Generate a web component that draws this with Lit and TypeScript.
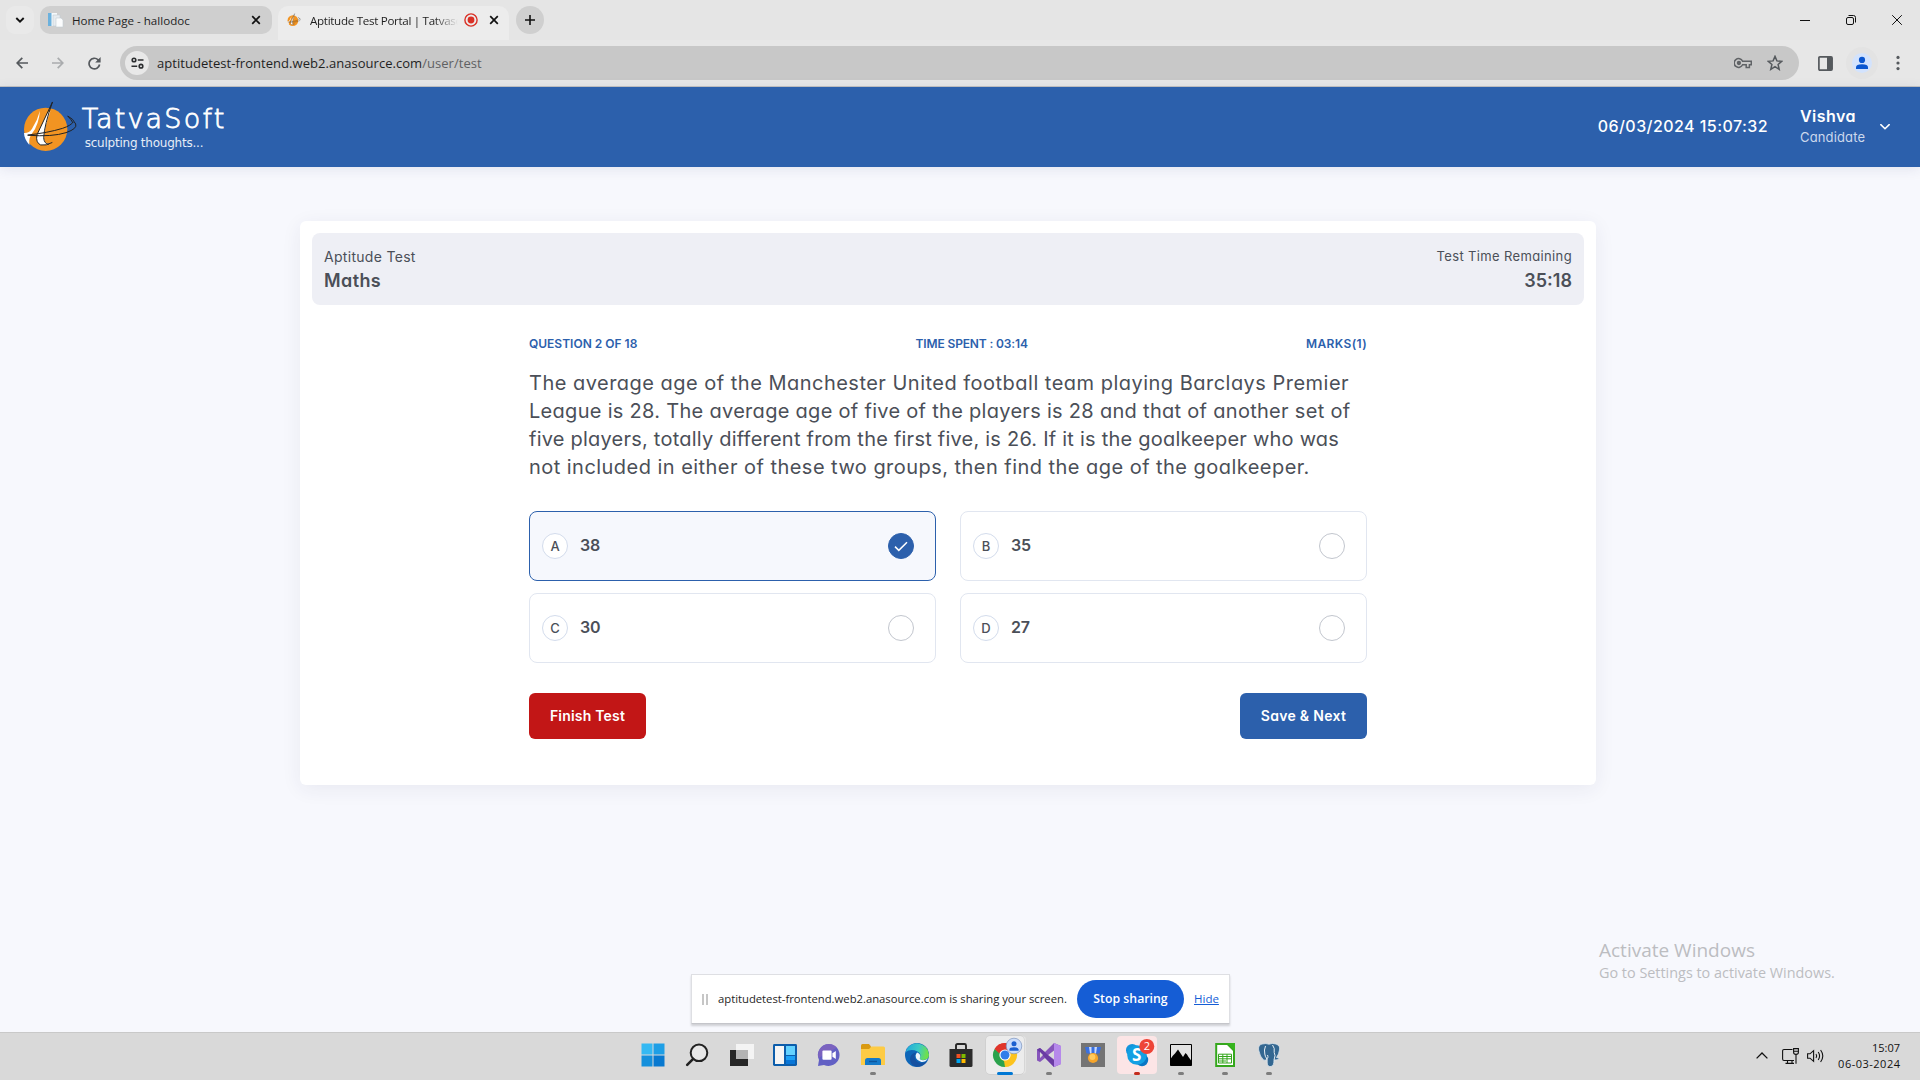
import { LitElement, html, css, svg } from 'lit';
import { customElement, property, state } from 'lit/decorators.js';
import { classMap } from 'lit/directives/class-map.js';

const UI_FONT = css`'Open Sans', 'Noto Sans', sans-serif`;
const APP_FONT = css`Inter, 'Open Sans', sans-serif`;

const logoMark = svg`
  <circle cx="107" cy="118" r="65" fill="#f29422" />
  <path d="M90 62Q82 92 66 116Q57 130 42 129Q42 146 58 165Q55 142 67 129Q86 104 90 62Z" fill="#fff" />
  <path d="M117 66L112 70L82 132Q75 158 91 164Q106 168 122 161Q103 164 102 145Q104 108 121 64Z" fill="#fff" />
  <g fill="none" stroke="#222" stroke-width="3" stroke-linecap="round">
    <path d="M127 37L81 134Q76 158 92 165Q108 168 126 158" />
    <path d="M127 37Q103 105 101 143Q102 162 116 163" />
    <path d="M54 135Q112 129 158 115Q184 106 189 97" />
    <path d="M54 136Q128 141 168 128Q203 116 197 102Q190 86 173 78Q184 89 188 97" />
  </g>`;

@customElement('browser-chrome')
export class BrowserChrome extends LitElement {
  static styles = css`
    :host { display: block; flex: none; font-family: ${UI_FONT}; color: #1f1f1f; }
    svg { display: block; flex: none; }
    .strip { display: flex; height: 40px; padding-left: 6px; background: #e5e5e5; box-sizing: border-box; }
    .search { width: 28px; height: 28px; margin: 6px 6px 0 0; border-radius: 9px; background: #e9e9e9; display: grid; place-items: center; }
    .tab { display: flex; align-items: center; box-sizing: border-box; margin-top: 6px; }
    .idle { width: 232px; height: 28px; border-radius: 10px; background: #cfcfcf; padding: 0 11px 0 8px; }
    .open { width: 231px; height: 34px; margin-left: 6px; padding: 0 10px 6px 9px; border-radius: 10px 10px 0 0; background: #ececec; }
    .label { flex: 1; white-space: nowrap; overflow: hidden; font-size: 11.6px; line-height: 18px; padding-top: 1px; }
    .idle .label { margin-left: 8px; }
    .open .label { margin: 0 6px 0 9px; letter-spacing: -0.3px; mask-image: linear-gradient(90deg, #000 84%, transparent); }
    .rec { margin-right: 11px; }
    .add { width: 28px; height: 28px; margin: 6px 0 0 7px; border-radius: 14px; background: #cfcfcf; display: grid; place-items: center; }
    .window { margin-left: auto; display: flex; align-items: center; gap: 36px; padding-right: 18px; }
    .toolbar { display: flex; align-items: center; height: 47px; box-sizing: border-box; border-bottom: 1px solid #c2c2c2; background: #e7e7e7; padding: 0 19px 0 16px; }
    .nav { display: flex; gap: 24px; width: 104px; }
    .address { flex: 1; height: 34px; border-radius: 17px; background: #c8c8c8; display: flex; align-items: center; padding: 0 16px 0 5px; box-sizing: border-box; }
    .site { width: 24px; height: 24px; border-radius: 50%; background: #e8e8e8; display: grid; place-items: center; margin-right: 8px; }
    .url { flex: 1; font-size: 13px; line-height: 20px; letter-spacing: 0.04px; white-space: nowrap; }
    .path { color: #5f6163; }
    .star { margin-left: 15px; }
    .panel { margin-left: 19px; }
    .profile { width: 32px; height: 32px; border-radius: 50%; background: #e3e3e3; display: grid; place-items: center; margin: 0 17px 0 13px; }
  `;

  private cross() {
    return html`<svg width="10" height="10" viewBox="0 0 10 10"><path d="M1.2 1.2L8.8 8.8M8.8 1.2L1.2 8.8" stroke="#111" stroke-width="1.7" /></svg>`;
  }

  render() {
    return html`
      <div class="strip">
        <div class="search"><svg width="10" height="10" viewBox="0 0 10 10"><path d="M1.3 3L5 6.7L8.7 3" fill="none" stroke="#111" stroke-width="1.9" /></svg></div>
        <div class="tab idle">
          <svg width="16" height="16" viewBox="0 0 16 16"><path d="M0 1h9v13H0z" fill="#f6f9fb" /><path d="M0 1h3.5v13H0z" fill="#6cb1dd" /><path d="M5 3h7v11H5z" fill="#e7ecf0" stroke="#c3ccd3" stroke-width=".6" /><path d="M8 6h5l2 2v7H8z" fill="#fbfcfd" stroke="#c3ccd3" stroke-width=".6" /></svg>
          <span class="label">Home Page - hallodoc</span>
          ${this.cross()}
        </div>
        <div class="tab open">
          <svg width="14" height="14" viewBox="36 30 170 160">${logoMark}</svg>
          <span class="label">Aptitude Test Portal | Tatvasoft</span>
          <svg class="rec" width="14" height="14" viewBox="0 0 14 14"><circle cx="7" cy="7" r="6.1" fill="none" stroke="#d93025" stroke-width="1.4" /><circle cx="7" cy="7" r="3.4" fill="#d93025" /></svg>
          ${this.cross()}
        </div>
        <div class="add"><svg width="10" height="10" viewBox="0 0 10 10"><path d="M5 0V10M0 5H10" stroke="#111" stroke-width="1.6" /></svg></div>
        <div class="window">
          <svg width="10" height="10" viewBox="0 0 10 10"><path d="M0 5.5H10" stroke="#111" /></svg>
          <svg width="10" height="10" viewBox="0 0 10 10" fill="none" stroke="#111"><rect x=".5" y="2.5" width="7" height="7" rx="1.5" /><path d="M2.5.5H7.5Q9.5.5 9.5 2.5V7.5" /></svg>
          <svg width="10" height="10" viewBox="0 0 10 10"><path d="M.2.2L9.8 9.8M9.8.2L.2 9.8" stroke="#111" /></svg>
        </div>
      </div>
      <div class="toolbar">
        <div class="nav">
          <svg width="12" height="12" viewBox="0 0 12 12" fill="none" stroke="#55595d" stroke-width="1.7"><path d="M12 6H1.2M6.3.8L1.2 6L6.3 11.2" /></svg>
          <svg width="12" height="12" viewBox="0 0 12 12" fill="none" stroke="#aaacae" stroke-width="1.7"><path d="M0 6H10.8M5.7.8L10.8 6L5.7 11.2" /></svg>
          <svg width="13" height="13" viewBox="0 0 13 13"><path d="M11.6 7.5A5.3 5.3 0 1 1 10.1 2.8L11.4 4.1" fill="none" stroke="#55595d" stroke-width="1.7" /><path d="M12.6 0V5.4H7.2Z" fill="#55595d" /></svg>
        </div>
        <div class="address">
          <span class="site"><svg width="13" height="12" viewBox="0 0 13 12" fill="none" stroke="#2b2d2f" stroke-width="1.6"><circle cx="3" cy="3" r="1.8" /><path d="M6.8 3H12.5M.5 9.2H6.2" /><circle cx="10" cy="9.2" r="1.8" /></svg></span>
          <span class="url">aptitudetest-frontend.web2.anasource.com<span class="path">/user/test</span></span>
          <svg width="18" height="12" viewBox="0 0 18 12" fill="none" stroke="#606366" stroke-width="1.5"><path d="M8.6 4.2A4.4 4.4 0 1 0 8.6 7.8H12.2V10.4H15.4V7.8H17.3V4.2Z" /><circle cx="4.9" cy="6" r="1.4" fill="#606366" /></svg>
          <svg class="star" width="16" height="16" viewBox="0 0 16 16"><path d="M8 1.4L9.9 5.9L14.8 6.3L11.1 9.5L12.2 14.3L8 11.7L3.8 14.3L4.9 9.5L1.2 6.3L6.1 5.9Z" fill="none" stroke="#55595d" stroke-width="1.5" /></svg>
        </div>
        <svg class="panel" width="15" height="15" viewBox="0 0 15 15"><rect x=".9" y=".9" width="13.2" height="13.2" rx="1" fill="none" stroke="#55595d" stroke-width="1.7" /><path d="M9 1H14V14H9Z" fill="#55595d" /></svg>
        <div class="profile"><svg width="20" height="20" viewBox="0 0 20 20"><circle cx="10" cy="10" r="10" fill="#d3e3fd" /><circle cx="10" cy="6.9" r="3.1" fill="#0b57d0" /><path d="M4 16V14.2Q4 11.2 10 11.2T16 14.2V16Z" fill="#0b57d0" /></svg></div>
        <svg width="6" height="16" viewBox="0 0 6 16" fill="#55595d"><circle cx="3" cy="2.4" r="1.6" /><circle cx="3" cy="8" r="1.6" /><circle cx="3" cy="13.6" r="1.6" /></svg>
      </div>`;
  }
}

@customElement('site-header')
export class SiteHeader extends LitElement {
  static styles = css`
    :host { flex: none; display: flex; align-items: center; height: 80px; box-sizing: border-box; padding: 0 30px 0 22px; background: #2c60ac; color: #fff; font-family: ${APP_FONT}; font-feature-settings: 'cv11'; box-shadow: 0 2px 12px rgba(40, 50, 110, 0.1); z-index: 1; white-space: nowrap; }
    svg { display: block; }
    .brand { display: flex; flex-direction: column; margin: 2px 0 0 3px; font-family: 'DejaVu Sans', sans-serif; }
    .name { font-size: 27px; font-weight: 200; line-height: 30px; letter-spacing: 2.2px; -webkit-text-stroke: 0.8px #fff; }
    .motto { font-size: 12px; line-height: 18px; letter-spacing: -0.23px; padding-left: 3px; color: #e6edf7; }
    .clock { margin-left: auto; padding-bottom: 2px; font-size: 16px; font-weight: 500; letter-spacing: 0.44px; }
    .user { margin-left: 32px; width: 65px; display: flex; flex-direction: column; }
    .who { font-size: 16px; font-weight: 600; line-height: 20px; letter-spacing: 0.44px; }
    .role { font-size: 13px; line-height: 22px; letter-spacing: 0.15px; color: #ccd9ec; }
    .caret { margin-left: 15px; }
  `;

  render() {
    return html`
      <svg width="56.7" height="53.3" viewBox="36 30 170 160">${logoMark}</svg>
      <div class="brand"><span class="name">TatvaSoft</span><span class="motto">sculpting thoughts...</span></div>
      <span class="clock">06/03/2024 15:07:32</span>
      <div class="user"><span class="who">Vishva</span><span class="role">Candidate</span></div>
      <svg class="caret" width="10" height="6" viewBox="0 0 10 6"><path d="M.8.6L5 4.8L9.2.6" fill="none" stroke="#fff" stroke-width="1.5" stroke-linecap="round" /></svg>`;
  }
}

@customElement('answer-option')
export class AnswerOption extends LitElement {
  @property() letter = '';
  @property() value = '';
  @property({ type: Boolean }) checked = false;

  static styles = css`
    :host { display: block; }
    .box { display: flex; align-items: center; height: 70px; box-sizing: border-box; padding: 0 21px 0 12px; border: 1px solid #e1e6f0; border-radius: 8px; background: #fff; }
    .box.on { border-color: #2c60ac; background: #f6f8fd; }
    .letter { width: 26px; height: 26px; box-sizing: border-box; border: 1px solid #d3dcec; border-radius: 50%; background: #fff; font-size: 13px; font-weight: 500; line-height: 25px; text-align: center; }
    .value { flex: 1; margin-left: 12px; padding-bottom: 2px; font-size: 16px; font-weight: 600; letter-spacing: -0.2px; }
    .radio { width: 26px; height: 26px; box-sizing: border-box; border: 1px solid #c2c6ce; border-radius: 50%; display: grid; place-items: center; }
    .on .radio { border-color: #2c60ac; background: #2c60ac; }
  `;

  render() {
    return html`<div class=${classMap({ box: true, on: this.checked })}>
      <span class="letter">${this.letter}</span>
      <span class="value">${this.value}</span>
      <span class="radio">${this.checked
        ? html`<svg width="14" height="11" viewBox="0 0 14 11"><path d="M1 5.6L4.8 9.4L13 1.2" fill="none" stroke="#fff" stroke-width="1.5" /></svg>`
        : null}</span>
    </div>`;
  }
}

@customElement('test-card')
export class TestCard extends LitElement {
  @state() private selected = 'A';

  private options = [['A', '38'], ['B', '35'], ['C', '30'], ['D', '27']];
  private question = [
    'The average age of the Manchester United football team playing Barclays Premier',
    'League is 28. The average age of five of the players is 28 and that of another set of',
    'five players, totally different from the first five, is 26. If it is the goalkeeper who was',
    'not included in either of these two groups, then find the age of the goalkeeper.',
  ];

  static styles = css`
    :host { display: block; width: 1296px; height: 564px; box-sizing: border-box; padding: 12px; background: #fff; border-radius: 6px; box-shadow: 0 4px 20px rgba(40, 45, 90, 0.07); color: #4b4f58; font-family: ${APP_FONT}; font-feature-settings: 'cv11'; white-space: nowrap; }
    .bar { display: flex; justify-content: space-between; align-items: center; height: 72px; box-sizing: border-box; padding: 0 12px; border-radius: 8px; background: #eeeff5; }
    .cell { display: flex; flex-direction: column; line-height: 24px; }
    .end { text-align: right; }
    .title { font-size: 14px; letter-spacing: 0.3px; }
    .subject { font-size: 18px; font-weight: 600; letter-spacing: 0.4px; }
    .caption { font-size: 13px; line-height: 23px; padding-bottom: 1px; letter-spacing: 0.36px; }
    .remaining { font-size: 18px; font-weight: 600; }
    .body { width: 838px; margin: 27px auto 0; }
    .meta { display: flex; justify-content: space-between; font-size: 12px; font-weight: 600; line-height: 24px; color: #2c60ac; }
    .spent { letter-spacing: -0.14px; }
    .marks { letter-spacing: 0.38px; }
    .question { display: flex; flex-direction: column; align-items: flex-start; margin-top: 13px; font-size: 20px; line-height: 28px; }
    .line:nth-child(1) { letter-spacing: 0.485px; }
    .line:nth-child(2) { letter-spacing: 0.295px; }
    .line:nth-child(3) { letter-spacing: 0.225px; }
    .line:nth-child(4) { letter-spacing: 0.46px; }
    .options { display: grid; grid-template-columns: 1fr 1fr; gap: 12px 24px; margin-top: 30px; }
    .actions { display: flex; justify-content: space-between; margin-top: 30px; }
    .button { height: 46px; border: 0; border-radius: 6px; padding: 0; color: #fff; font: 600 14px/46px ${APP_FONT}; font-feature-settings: 'cv11'; }
    .finish { width: 117px; background: #c21616; letter-spacing: 0.2px; }
    .next { width: 127px; background: #2c60ac; letter-spacing: 0.3px; }
  `;

  render() {
    return html`
      <div class="bar">
        <div class="cell"><span class="title">Aptitude Test</span><span class="subject">Maths</span></div>
        <div class="cell end"><span class="caption">Test Time Remaining</span><span class="remaining">35:18</span></div>
      </div>
      <div class="body">
        <div class="meta"><span>QUESTION 2 OF 18</span><span class="spent">TIME SPENT : 03:14</span><span class="marks">MARKS(1)</span></div>
        <div class="question">${this.question.map((line) => html`<span class="line">${line}</span>`)}</div>
        <div class="options">
          ${this.options.map(([letter, value]) => html`<answer-option .letter=${letter} .value=${value}
            .checked=${this.selected === letter} @click=${() => (this.selected = letter)}></answer-option>`)}
        </div>
        <div class="actions"><button class="button finish">Finish Test</button><button class="button next">Save &amp; Next</button></div>
      </div>`;
  }
}

@customElement('share-bar')
export class ShareBar extends LitElement {
  static styles = css`
    :host { display: flex; align-items: center; width: 539px; height: 50px; box-sizing: border-box; padding: 0 10px; background: #fff; border: 1px solid #dedfe3; border-bottom-color: #c4c5ca; box-shadow: 0 2px 2px rgba(0, 0, 0, 0.16); font: 11.3px/18px ${UI_FONT}; color: #1f1f1f; white-space: nowrap; }
    .grip { width: 2px; height: 11px; margin-right: 10px; border: solid #c6c6c6; border-width: 0 2px; }
    .message { width: 359px; letter-spacing: -0.02px; }
    .stop { width: 107px; height: 38px; border-radius: 19px; background: #155dd5; color: #fff; font-size: 12.3px; font-weight: 600; line-height: 38px; text-align: center; }
    .hide { margin-left: 10px; color: #155dd5; font-size: 11.5px; text-decoration: underline; }
  `;

  render() {
    return html`<span class="grip"></span><span class="message">aptitudetest-frontend.web2.anasource.com is sharing your screen.</span><span class="stop">Stop sharing</span><span class="hide">Hide</span>`;
  }
}

type Mark = '' | 'idle' | 'active' | 'alert';

const apps: { mark: Mark; tile?: string; art: unknown }[] = [
  { mark: '', art: svg`<path d="M.5.5h11v11H.5z" fill="#35b9f3" /><path d="M12.5.5h11v11h-11z" fill="#1e9fe6" /><path d="M.5 12.5h11v11H.5z" fill="#1590dc" /><path d="M12.5 12.5h11v11h-11z" fill="#0879d0" />` },
  { mark: '', art: svg`<circle cx="14" cy="9.8" r="8.3" fill="#e8e8e8" stroke="#222" stroke-width="2" /><path d="M8.2 15.8L2.2 21.8" stroke="#222" stroke-width="2.6" stroke-linecap="round" />` },
  { mark: '', art: svg`<path d="M1 7h18v16H1z" fill="#262626" /><path d="M7 1h18v15H7z" fill="#f4f4f4" /><path d="M7 7h12v9H7z" fill="#b4b4b4" />` },
  { mark: '', art: svg`<rect y="1" width="24" height="22" rx="1.4" fill="#0c5dab" /><path d="M2 3h9v18H2z" fill="#f5f5f5" /><path d="M13 3h9v9h-9z" fill="#63d2ff" /><path d="M13 13h9v4h-9z" fill="#1ba1f6" /><path d="M13 17h9v4h-9z" fill="#0876d8" />` },
  { mark: '', art: svg`<path d="M12 1A11 11 0 1 1 7 22L1 23L2 17A11 11 0 0 1 12 1Z" fill="#6260c4" /><path d="M12 1A11 11 0 0 0 1.5 15L20 4.5A11 11 0 0 0 12 1Z" fill="#8665bd" opacity=".7" /><rect x="5.4" y="7.4" width="9.2" height="9.4" rx="1" fill="#fff" /><path d="M15.4 10.2L18.8 8V16L15.4 13.8Z" fill="#fff" />` },
  { mark: 'idle', art: svg`<path d="M0 2.5Q0 1 1.5 1H8L10 3.5V8H0Z" fill="#d99a12" /><path d="M0 6H8L10.5 3.5H22.5Q24 3.5 24 5V22H0Z" fill="#fdcb45" /><path d="M4 22V17.5Q4 15 6.5 15H17.5Q20 15 20 17.5V22Z" fill="#1479c9" /><path d="M8 18.5H16" stroke="#0b559e" stroke-width="1.4" />` },
  { mark: '', art: svg`<defs><linearGradient id="sea" x1="0" y1="0" x2="1" y2=".2"><stop stop-color="#1fa6df" /><stop offset=".6" stop-color="#3ccbc4" /><stop offset="1" stop-color="#6fe04c" /></linearGradient></defs><circle cx="12" cy="12" r="12" fill="#0e66b8" /><path d="M.5 9A12 12 0 0 1 24 11.5Q24 16.5 18.5 17Q14.5 17 14.8 15Q17 10.5 12.5 8.4Q6 5.5.5 9Z" fill="url(#sea)" /><path d="M11 9.5Q8 14 11.5 18Q16 22 22.3 18Q18 24 11.5 23.8Q5 22 5 16Q5.2 10.5 11 9.5Z" fill="#1450a0" /><path d="M12.2 9.6Q16.5 11.5 14.8 15Q14.5 17 18 17.2Q21 17.2 23 15.5Q20.5 19.4 16.5 19Q10.5 17 10.6 12.5Q11 10.5 12.2 9.6Z" fill="#eef5fa" />` },
  { mark: '', art: svg`<path d="M7 7V2.5Q7 1 8.5 1H15.5Q17 1 17 2.5V7" fill="none" stroke="#262626" stroke-width="1.9" /><path d="M.5 6H23.5V22.5Q23.5 24 22 24H2Q.5 24 .5 22.5Z" fill="#2b2b2b" /><path d="M7.5 11h4v4h-4z" fill="#f25022" /><path d="M12.5 11h4v4h-4z" fill="#7fba00" /><path d="M7.5 16h4v4h-4z" fill="#00a4ef" /><path d="M12.5 16h4v4h-4z" fill="#ffb900" />` },
  { mark: 'active', tile: 'light', art: svg`<path d="M12 12L1.6 6A12 12 0 0 1 22.4 6Z" fill="#e0352b" /><path d="M12 12L22.4 6A12 12 0 0 1 12 24Z" fill="#fcc31e" /><path d="M12 12L12 24A12 12 0 0 1 1.6 6Z" fill="#2ba24c" /><path d="M1.6 6A12 12 0 0 1 22.4 6H12A6 6 0 0 0 6.3 10.5Z" fill="#e0352b" /><path d="M12 24L17.5 14.5L12 12L8 16L11 18Z" fill="#fcc31e" /><circle cx="12" cy="12" r="5.6" fill="#fff" /><circle cx="12" cy="12" r="4.5" fill="#2f7de9" /><circle cx="21" cy="3" r="7.8" fill="#c9dcfb" stroke="#7d94bd" stroke-width=".7" /><circle cx="21" cy="0.8" r="2.5" fill="#1a5fd0" /><path d="M16.4 7.8V6.5Q16.4 4.3 21 4.3T25.6 6.5V7.8Z" fill="#1a5fd0" />` },
  { mark: 'idle', art: svg`<path d="M17 0L24 3V21L17 24L8 15L3 19L0 17.5V6.5L3 5L8 9Z" fill="#8655bb" /><path d="M0 6.5L3 5L20 20L17 24Z" fill="#6a3ba3" /><path d="M17 0L24 3V21L17 24Z" fill="#b689eb" /><path d="M17 7.5V16.5L11.2 12ZM3 9V15L6 12Z" fill="#dadada" />` },
  { mark: '', art: svg`<path d="M0 0h24v24H0z" fill="#747474" /><path d="M4 4H20L18.5 10.5H5.5Z" fill="#3a70e0" /><path d="M8 4H10.5V10.5H9ZM13.5 4H16L15 10.5H13.5Z" fill="#c8dbff" /><circle cx="12" cy="15" r="5.1" fill="#f6a52b" /><circle cx="11.4" cy="14" r="3" fill="#ffca5e" />` },
  { mark: 'alert', tile: 'pink', art: svg`<circle cx="7.2" cy="7.2" r="6.2" fill="#1594dc" /><circle cx="17" cy="17" r="6.2" fill="#0a76c4" /><circle cx="12" cy="12" r="9.8" fill="#13a0e3" /><text x="11.6" y="18" font-family="Open Sans, sans-serif" font-size="17" font-weight="700" fill="#fff" text-anchor="middle">S</text><circle cx="21.8" cy="3.4" r="7.5" fill="#ee4437" /><text x="21.8" y="7.3" font-family="Open Sans, sans-serif" font-size="11" font-weight="500" fill="#fff" text-anchor="middle">2</text>` },
  { mark: 'idle', art: svg`<path d="M1.5 1.5h21v21h-21z" fill="#e2e2e2" stroke="#000" /><path d="M1.5 16L4 12.5L6 10.5L9 6.5L12 11L14 14L16.5 10L18 11.5L19.5 14L22.5 18V22.5H1.5Z" />` },
  { mark: 'idle', art: svg`<path d="M3.2 1.1H14.5L21 7.5V23H3.2Z" fill="#fff" stroke="#35a71d" stroke-width="2" /><path d="M14 0H22V8Z" fill="#35b51d" /><path d="M5.5 11.2H18.5V20H5.5ZM5.5 13.5H18.5M5.5 15.8H18.5M5.5 18H13M9.8 11.2V20M14 11.2V20" fill="none" stroke="#35a71d" stroke-width="1" />` },
  { mark: 'idle', art: svg`<path d="M5 1Q9 0 12 1.2Q15.5-.2 19 1Q23.5 2.5 22.5 7Q22 11 19.5 14.5Q22 15 22.5 15.2Q20.5 17.5 17 17Q17 23 14 23.5Q10.5 24 10.2 20V16Q8 18 6.5 17Q3 14 1.6 7Q1 2 5 1Z" fill="#336791" stroke="#dce6ee" stroke-width=".8" /><path d="M8.5 3Q6.8 7 7.8 11Q8 14 10.2 16M15.5 2Q18 5 17.2 9.5Q19 12 17 17M10.5 12Q12 16 9 15.4" fill="none" stroke="#e6eef4" stroke-width="1" />` },
];

@customElement('task-bar')
export class TaskBar extends LitElement {
  static styles = css`
    :host { flex: none; display: grid; grid-template-columns: 1fr auto 1fr; height: 48px; box-sizing: border-box; border-top: 1px solid #c9c9c9; background: #d9d9d9; font-family: ${UI_FONT}; color: #111; z-index: 1; }
    svg { display: block; overflow: visible; }
    .apps { grid-column: 2; display: flex; padding-left: 2px; }
    .app { width: 44px; height: 47px; display: flex; flex-direction: column; align-items: center; }
    .tile { width: 38px; height: 38px; margin-top: 4px; border-radius: 4px; display: grid; place-items: center; margin-top: 3px; }
    .light { background: #ececec; box-shadow: 0 0 0 0.5px #c8c8c8, 2px 0 0 #e4e4e4; }
    .pink { width: 40px; background: #fce5e6; }
    .dot { height: 3px; border-radius: 2px; margin-top: -2px; }
    .tile + .idle { width: 6px; background: #7d7d7d; }
    .tile + .alert { width: 6px; background: #c42b1c; }
    .tile + .active { width: 16px; background: #0078d4; }
    .tray { display: flex; align-items: center; justify-content: flex-end; padding: 0 20px 2px 0; }
    .net { margin-left: 14px; }
    .vol { margin-left: 8px; }
    .time { margin-left: 14px; width: 62px; display: flex; flex-direction: column; text-align: right; font-size: 11px; line-height: 16px; white-space: nowrap; }
    .date { letter-spacing: 0.5px; margin-right: -0.5px; }
  `;

  render() {
    return html`
      <div class="apps">
        ${apps.map((a) => html`<div class="app">
          <div class=${classMap({ tile: true, light: a.tile === 'light', pink: a.tile === 'pink' })}><svg width="24" height="24" viewBox="0 0 24 24">${a.art}</svg></div>
          ${a.mark ? html`<div class="dot ${a.mark}"></div>` : null}
        </div>`)}
      </div>
      <div class="tray">
        <svg width="12" height="7" viewBox="0 0 12 7"><path d="M.6 6.4L6 1L11.4 6.4" fill="none" stroke="#111" stroke-width="1.3" /></svg>
        <svg class="net" width="17" height="16" viewBox="0 0 17 16" fill="none" stroke="#111" stroke-width="1.1"><path d="M10.5 1.5H2Q.6 1.5.6 3V11Q.6 12.5 2 12.5H12M3.5 15.4H12M5.5 12.5V15.4M10 12.5V15.4M14 6.4V15.8" /><path d="M11.6.6H16.4V4.2Q16.4 6.4 14 6.4T11.6 4.2ZM11.6 3.2H16.4" /></svg>
        <svg class="vol" width="17" height="14" viewBox="0 0 17 14" fill="none" stroke="#111" stroke-width="1.1"><path d="M.6 4.8H3L6.6 1.6V12.4L3 9.2H.6ZM9 5Q10.4 7 9 9M11.2 3Q14 7 11.2 11M13.6 1Q18 7 13.6 13" /></svg>
        <div class="time"><span>15:07</span><span class="date">06-03-2024</span></div>
      </div>`;
  }
}

@customElement('app-root')
export class AppRoot extends LitElement {
  static styles = css`
    :host { display: flex; flex-direction: column; position: relative; width: 1920px; height: 1080px; overflow: hidden; background: #f7f8fd; }
    .page { flex: 1; display: flex; justify-content: center; align-items: flex-start; padding: 54px 24px 0 0; }
    .sharing { position: absolute; left: 691px; top: 974px; z-index: 2; }
    .watermark { position: absolute; left: 1599px; top: 937px; display: flex; flex-direction: column; color: #bcbdc1; font-family: ${UI_FONT}; white-space: nowrap; }
    .heading { font-size: 19px; line-height: 27px; }
    .hint { font-size: 14.4px; line-height: 18px; }
  `;

  render() {
    return html`
      <browser-chrome></browser-chrome>
      <site-header></site-header>
      <div class="page"><test-card></test-card></div>
      <task-bar></task-bar>
      <share-bar class="sharing"></share-bar>
      <div class="watermark"><span class="heading">Activate Windows</span><span class="hint">Go to Settings to activate Windows.</span></div>`;
  }
}
